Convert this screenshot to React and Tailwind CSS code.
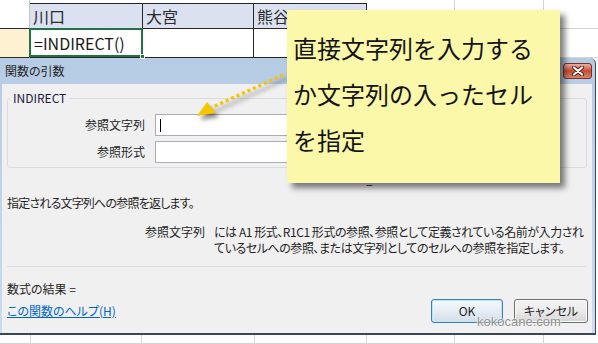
const Cell = ({ className, children }) => (
  <div className={`shrink-0 flex items-center ${className}`}>{children}</div>
);

export default function App() {
  return (
    <div className="relative w-[598px] h-[344px] overflow-hidden bg-white font-['Noto_Sans_CJK_JP','Noto_Sans',sans-serif] text-[#1e1e1e] [font-feature-settings:'palt']">
      {/* sheet: header row */}
      <div className="flex h-[29px]">
        <Cell className="w-[30px] h-[29px] border-r border-[#c4c4c4] border-b-[1px] border-b-[#2a2a2a]" />
        <Cell className="w-[113px] h-[26px] mt-[3px] border-t border-r border-b border-[#262626] bg-[#dbe1f1] pl-[3px] text-[16px] text-[#2a2a2a]">川口</Cell>
        <Cell className="w-[111px] h-[26px] mt-[3px] border-t border-r border-b border-[#262626] bg-[#dbe1f1] pl-[3px] text-[16px] text-[#2a2a2a]">大宮</Cell>
        <Cell className="w-[113px] h-[26px] mt-[3px] border-t border-r border-b border-[#262626] bg-[#dbe1f1] pl-[3px] text-[16px] text-[#2a2a2a]">熊谷</Cell>
        <Cell className="w-[88px] h-[29px] border-r border-b border-[#d4d4d4]" />
        <Cell className="w-[89px] h-[29px] border-r border-b border-[#d4d4d4]" />
        <Cell className="flex-1 h-[29px] border-b border-[#d4d4d4]" />
      </div>

      {/* sheet: formula row */}
      <div className="flex h-[29px]">
        <Cell className="w-[30px] h-[29px] bg-[#fdf1d2] border-r border-[#c4c4c4] border-b border-b-[#2a2a2a]" />
        <Cell className="relative w-[113px] h-[29px] border-r border-b border-[#262626] pl-[4px] text-[16px] text-[#1a1a1a]">
          =INDIRECT()
          <div className="absolute -left-[1px] -top-[1px] -right-[1px] bottom-0 border-2 border-[#217346]" />
          <div className="absolute -right-[3px] -bottom-[2px] w-[5px] h-[5px] bg-[#217346] border border-white" />
        </Cell>
        <Cell className="w-[111px] h-[29px] border-r border-b border-[#262626]" />
        <Cell className="w-[113px] h-[29px] border-r border-b border-[#262626]" />
        <Cell className="w-[88px] h-[29px] border-r border-b border-[#d4d4d4]" />
        <Cell className="w-[89px] h-[29px] border-r border-b border-[#d4d4d4]" />
        <Cell className="flex-1 h-[29px] border-b border-[#d4d4d4]" />
      </div>

      {/* dialog */}
      <div className="w-[596px] h-[277px] flex flex-col border-r border-b-2 border-[#3b4756] rounded-tr-[6px] bg-linear-to-b from-[#b6cbe4] to-[#c9dcf0]">
        <div className="h-[26px] shrink-0 flex items-center justify-between pl-[5px] pr-[3px]">
          <span className="text-[12px] text-[#1f1f1f]">関数の引数</span>
          <div className="w-[29px] h-[16px] rounded-[3px] border border-[#7a3326] bg-linear-to-b from-[#eab0a2] via-[#c94a31] to-[#d9846d] flex items-center justify-center">
            <svg width="14" height="10" viewBox="0 0 14 10">
              <path d="M3 1.5 L11 8.5 M11 1.5 L3 8.5" stroke="#4a1c14" strokeWidth="4" strokeLinecap="round" />
              <path d="M3 1.5 L11 8.5 M11 1.5 L3 8.5" stroke="#ffffff" strokeWidth="2.2" strokeLinecap="round" />
            </svg>
          </div>
        </div>

        <div className="flex-1 ml-[2px] mr-[3px] bg-[#f0f0f0] px-[5px] flex flex-col text-[12px] leading-[16px]">
          <fieldset className="mt-[6px] border border-[#d5dce4] rounded-[3px] pb-[4px]">
            <legend className="ml-[2px] px-[3px] text-[12px] leading-[16px] text-[#1a1a40]">INDIRECT</legend>
            <div className="pt-[8px] flex flex-col gap-[5px]">
              <div className="flex items-center h-[22px]">
                <span className="w-[137px] text-right">参照文字列</span>
                <div className="ml-[10px] w-[205px] h-[22px] border border-[#abadb3] bg-white flex items-center">
                  <span className="ml-[4px] w-px h-[13px] bg-black" />
                </div>
              </div>
              <div className="flex items-center h-[22px]">
                <span className="w-[137px] text-right">参照形式</span>
                <div className="ml-[10px] w-[205px] h-[22px] border border-[#abadb3] bg-white" />
              </div>
            </div>
          </fieldset>

          <div className="mt-[7px] h-[16px] pl-[359px]">=</div>
          <div className="mt-[4px] tracking-[-0.8px]">指定される文字列への参照を返します。</div>

          <div className="mt-[13px] flex pl-[138px]">
            <span className="w-[69px] shrink-0">参照文字列</span>
            <span className="tracking-[-0.45px] whitespace-nowrap">
              には A1 形式、R1C1 形式の参照、参照として定義されている名前が入力され
              <br />
              ているセルへの参照、または文字列としてのセルへの参照を指定します。
            </span>
          </div>

          <div className="mt-[10px] h-px bg-[#d8dfe7]" />

          <div className="mt-[14px]">数式の結果 =</div>

          <div className="mt-[2px] h-[24px] flex items-center justify-between">
            <span className="text-[#0066cc] underline">この関数のヘルプ(H)</span>
            <div className="flex gap-[11px] -mr-[1px]">
              <div className="w-[72px] h-[24px] rounded-[3px] border border-[#3c7fb1] bg-linear-to-b from-[#f4f9fd] via-[#e6eef5] to-[#d3dde6] shadow-[inset_0_0_0_1px_#bfe3f8] flex items-center justify-center">OK</div>
              <div className="w-[74px] h-[24px] rounded-[3px] border border-[#707070] bg-linear-to-b from-[#f3f3f3] via-[#ebebeb] to-[#d4d4d4] shadow-[inset_0_0_0_1px_#fbfbfb] flex items-center justify-center">キャンセル</div>
            </div>
          </div>
        </div>
      </div>

      {/* sheet below the dialog */}
      <div className="flex h-[9px]">
        <div className="w-[31px] border-r border-b border-[#d4d4d4]" />
        <div className="w-[111px] border-r border-b border-[#d4d4d4]" />
        <div className="w-[113px] border-r border-b border-[#d4d4d4]" />
        <div className="w-[112px] border-r border-b border-[#d4d4d4]" />
        <div className="w-[88px] border-r border-b border-[#d4d4d4]" />
        <div className="w-[89px] border-r border-b border-[#d4d4d4]" />
        <div className="flex-1 border-b border-[#d4d4d4]" />
      </div>

      {/* watermark */}
      <div className="absolute left-[477px] top-[314px] text-[13px] leading-[16px] font-['Liberation_Sans',sans-serif] text-[#8f8f8f] [text-shadow:0_0_2px_#ffffff,0_0_2px_#ffffff]">
        kokocane.com
      </div>

      {/* callout arrow */}
      <svg className="absolute left-0 top-0 drop-shadow-[3px_4px_2px_rgba(0,0,0,0.45)]" width="598" height="344" viewBox="0 0 598 344">
        <path d="M283 75 L213 107" stroke="#f6c400" strokeWidth="3.5" strokeDasharray="3 3" fill="none" />
        <polygon points="207,102 197,116 216,113" fill="#f6c400" />
      </svg>

      {/* sticky note */}
      <div className="absolute left-[287px] top-[10px] w-[273px] h-[173px] bg-[#fcf8aa] shadow-[5px_5px_6px_rgba(0,0,0,0.5)] pl-[6px] pt-[15px] text-[24px] leading-[46px] text-[#141414] [font-feature-settings:normal]">
        直接文字列を入力する
        <br />
        か文字列の入ったセル
        <br />
        を指定
      </div>
    </div>
  );
}
